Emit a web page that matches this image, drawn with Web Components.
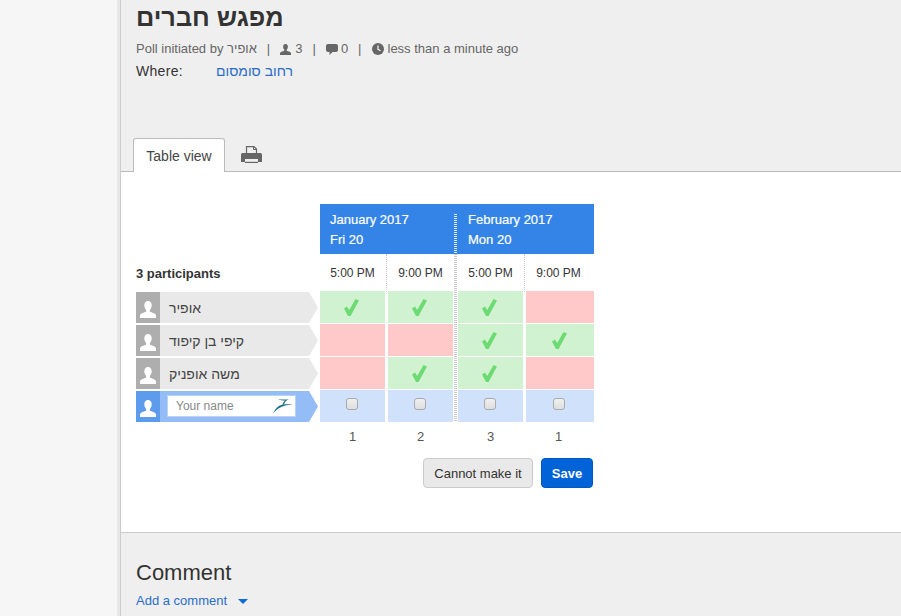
<!DOCTYPE html>
<html>
<head>
<meta charset="utf-8">
<title>Poll</title>
<style>
  html, body { margin: 0; height: 616px; overflow: hidden; }
  body {
    background: #f6f6f6;
    font-family: "Liberation Sans", Arial, sans-serif;
    color: #333;
    display: flex;
  }
</style>
</head>
<body>
<template id="person-tpl">
  <style>
    :host { display: block; width: 182px; height: 31px; }
    .row { display: flex; height: 31px; background: #e9e9e9; clip-path: polygon(0 0, 173px 0, 182px 15.5px, 173px 31px, 0 31px); }
    .avatar { width: 24px; background: #aeaeae; display: flex; align-items: center; justify-content: center; }
    .name { flex: 1; padding-left: 9px; font-size: 14px; line-height: 33px; color: #444; }
    svg { width: 16px; height: 17px; fill: #fff; margin-top: 3px; }
  </style>
  <div class="row">
    <div class="avatar"><svg viewBox="0 0 16 17"><path d="M8 0c2.300 0 3.700 1.700 3.700 4.300 0 2-.8 3.700-1.800 4.700v1.700c2 .8 5.500 1.500 6.100 3.500V17H0v-2.800c.6-2 4.100-2.700 6.100-3.500V9C5.100 8 4.300 6.300 4.300 4.300 4.300 1.700 5.700 0 8 0z"/></svg></div>
    <div class="name"><slot></slot></div>
  </div>
</template>

<script>
  const ICONS = {
    user: '<svg width="11" height="11" viewBox="0 0 16 16" fill="#666"><path d="M8 0c2.300 0 3.400 1.600 3.400 4 0 1.900-.7 3.400-1.700 4.300v1.500c2 .8 5.700 1.300 6.300 3.200V16H0v-3c.6-1.900 4.300-2.400 6.300-3.200V8.300C5.300 7.400 4.600 5.900 4.600 4 4.600 1.600 5.700 0 8 0z"/></svg>',
    comment: '<svg width="12" height="11" viewBox="0 0 12 11" fill="#666"><path d="M2 0h8a2 2 0 0 1 2 2v4a2 2 0 0 1-2 2H6.500L3.500 11V8H2a2 2 0 0 1-2-2V2a2 2 0 0 1 2-2z"/></svg>',
    clock: '<svg width="12" height="12" viewBox="0 0 12 12"><circle cx="6" cy="6" r="6" fill="#666"/><path d="M6 2.500V6.300L8.500 7.800" fill="none" stroke="#efefef" stroke-width="1.300"/></svg>',
    printer: '<svg width="21" height="17" viewBox="0 0 21 17"><path d="M5.500 7V.6h7.500l2.500 2.500V7" fill="none" stroke="#666" stroke-width="1.200"/><path d="M12.500.5v3h3" fill="none" stroke="#666"/><path d="M1.500 7h18A1.500 1.500 0 0 1 21 8.500V16h-21V8.500A1.500 1.500 0 0 1 1.500 7z" fill="#666"/><path d="M4 13h13v3H4z" fill="#efefef"/><path d="M4 15.800h13V17H4z" fill="#666"/></svg>',
    check: '<svg width="15" height="17" viewBox="0 0 15 17" fill="#6ddb73"><path d="M0 9.600 3 7.400 5.200 11 11.500 0 15 1.600 6.600 17H4z"/></svg>',
    bird: '<svg width="20" height="15" viewBox="0 0 20 15"><path d="M0 14.500C2 10 5 6.700 9 5.800c3-.6 7-.5 11-.2-3 .5-6 .6-8.500 1.200C7 8 3.500 10.500 0 14.500z" fill="#1f6f8b"/><path d="M5 0c3 .6 7 .7 11 .3-2.500.8-4 2-5 5.200L9.500 5.800C10 3.600 11 2.500 12 1.600 9.500 1.500 7 1 5 0z" fill="#1f6f8b"/></svg>'
  };

  class PersonRow extends HTMLElement {
    constructor() {
      super();
      const shadow = this.attachShadow({ mode: 'open' });
      shadow.appendChild(document.getElementById('person-tpl').content.cloneNode(true));
    }
  }
  customElements.define('person-row', PersonRow);

  class NewPerson extends HTMLElement {
    constructor() {
      super();
      const shadow = this.attachShadow({ mode: 'open' });
      shadow.innerHTML = `
        <style>
          :host { display: block; width: 182px; height: 31px; }
          .row { display: flex; height: 31px; background: #94bcf7; clip-path: polygon(0 0, 173px 0, 182px 15.5px, 173px 31px, 0 31px); }
          .avatar { width: 24px; background: #5d9cec; display: flex; align-items: center; justify-content: center; }
          .avatar svg { width: 16px; height: 17px; fill: #fff; margin-top: 3px; }
          .field { margin: 4px 0 0 7px; width: 129px; height: 22px; box-sizing: border-box; background: #fff; border: 1px solid #b9d2f5;
            display: flex; align-items: center; justify-content: space-between; padding: 0 2px 0 8px; font-size: 12px; color: #888; }
        </style>
        <div class="row">
          <div class="avatar"><svg viewBox="0 0 16 17"><path d="M8 0c2.300 0 3.700 1.700 3.700 4.300 0 2-.8 3.700-1.800 4.700v1.700c2 .8 5.500 1.500 6.100 3.500V17H0v-2.800c.6-2 4.100-2.700 6.100-3.500V9C5.100 8 4.300 6.300 4.300 4.300 4.300 1.700 5.700 0 8 0z"/></svg></div>
          <div class="field"><span>Your name</span>${ICONS.bird}</div>
        </div>`;
    }
  }
  customElements.define('new-person', NewPerson);

  // one vote cell: state is y (green), n (red) or c (checkbox)
  class VoteCell extends HTMLElement {
    constructor() {
      super();
      this.attachShadow({ mode: 'open' });
    }
    connectedCallback() {
      const s = this.getAttribute('state');
      const bg = { y: '#d1f2d1', n: '#ffc9c9', c: '#cfe1fb' }[s];
      const inner = s === 'y' ? ICONS.check : s === 'c' ? '<span class="box"></span>' : '';
      this.shadowRoot.innerHTML = `
        <style>
          :host { display: flex; height: 32px; background: ${bg}; align-items: center; justify-content: center; }
          svg { display: block; margin-right: 2px; }
          .box { display: block; width: 10px; height: 10px; border: 1px solid #aaa; border-radius: 3px; background: linear-gradient(#f0f0f0, #dedede); margin: 0 2px 4px 0; }
        </style>${inner}`;
    }
  }
  customElements.define('vote-cell', VoteCell);

  class PollTable extends HTMLElement {
    constructor() {
      super();
      const shadow = this.attachShadow({ mode: 'open' });
      const rows = ['yyyn', 'nnyy', 'nyyn', 'cccc'];
      const cells = rows.map(r => `
        <div class="votes">
          ${[...r].map(st => `<vote-cell state="${st}"></vote-cell>`).join('')}
        </div>`).join('');
      shadow.innerHTML = `
        <style>
          :host { display: block; width: 458px; font-size: 12px; }
          .grid { display: grid; grid-template-columns: 184px 274px; }
          .left { display: flex; flex-direction: column; gap: 2px; }
          .count-head { height: 86px; display: flex; align-items: flex-end; font-weight: bold; font-size: 13px; color: #333; box-sizing: border-box; padding-bottom: 9px; }
          .right { position: relative; }
          .dates { height: 50px; background: #3484e8; color: #fff; font-size: 13px; display: grid; grid-template-columns: 136px 138px; line-height: 20px; -webkit-text-stroke: .2px #fff; }
          .dates div { padding: 6px 0 0 10px; box-sizing: border-box; }
          .dates div + div { padding-left: 12px; }
          .times, .votes, .totals { display: grid; grid-template-columns: 65px 68px 70px 71px; }
          .times { height: 37px; text-align: center; color: #333; font-size: 12px; line-height: 38px; }
          .times span, .totals span { box-sizing: border-box; }
          .times span:nth-child(2), .totals span:nth-child(2) { margin-left: 1px; border-left: 1px dotted #ccc; padding-left: 1px; }
          .times span:nth-child(3), .totals span:nth-child(3) { padding-left: 5px; }
          .times span:nth-child(4), .totals span:nth-child(4) { margin-left: 1px; border-left: 1px dotted #ccc; padding: 0 3px 0 1px; }
          .totals span { border-color: transparent !important; }
          .votes { margin-bottom: 1px; }
          .votes vote-cell:nth-child(2) { margin-left: 3px; }
          .votes vote-cell:nth-child(3) { margin-left: 5px; }
          .votes vote-cell:nth-child(4) { margin-left: 3px; }
          .totals { text-align: center; color: #555; font-size: 13px; line-height: 15px; padding-top: 6px; }
          .sep { position: absolute; left: 134px; width: 3px; background: repeating-linear-gradient(#c9c9c9 0 1px, transparent 1px 2px); top: 50px; height: 168px; }
          .sep.top { top: 10px; height: 40px; background: repeating-linear-gradient(#e0ebfa 0 1px, transparent 1px 2px); }
        </style>
        <div class="grid">
          <div class="left">
            <div class="count-head">3 participants</div>
            <person-row>אופיר</person-row>
            <person-row>קיפי בן קיפוד</person-row>
            <person-row>משה אופניק</person-row>
            <new-person></new-person>
          </div>
          <div class="right">
            <div class="dates">
              <div>January 2017<br>Fri 20</div>
              <div>February 2017<br>Mon 20</div>
            </div>
            <div class="times"><span>5:00 PM</span><span>9:00 PM</span><span>5:00 PM</span><span>9:00 PM</span></div>
            ${cells}
            <div class="totals"><span>1</span><span>2</span><span>3</span><span>1</span></div>
            <div class="sep"></div><div class="sep top"></div>
          </div>
        </div>`;
    }
  }
  customElements.define('poll-table', PollTable);

  class PollHeader extends HTMLElement {
    constructor() {
      super();
      const shadow = this.attachShadow({ mode: 'open' });
      shadow.innerHTML = `
        <style>
          :host { display: block; height: 172px; box-sizing: border-box; padding: 0 0 0 15px; background: #efefef; border-bottom: 1px solid #bbb; position: relative; }
          h1 { margin: 0; padding-top: 2px; font-size: 25.300px; line-height: 30px; font-weight: bold; color: #333; white-space: nowrap; }
          .meta { margin-top: 9px; font-size: 13px; line-height: 16px; color: #666; display: flex; align-items: center; white-space: pre; }
          .meta .sep { margin: 0 10px; }
          .where { margin-top: 5px; font-size: 14px; line-height: 18px; display: flex; color: #333; }
          .where b { font-weight: normal; width: 80px; letter-spacing: .3px; }
          a { color: #2a6dc9; text-decoration: none; }
          .tabs { position: absolute; left: 12px; bottom: -1px; display: flex; align-items: center; }
          .tab { width: 92px; height: 34px; box-sizing: border-box; background: #fff; border: 1px solid #bbb; border-bottom: 0; border-radius: 3px 3px 0 0; text-align: center; font-size: 14px; line-height: 34px; color: #444; }
          .print { margin-left: 16px; margin-top: -1px; display: flex; }
        </style>
        <h1>מפגש חברים</h1>
        <div class="meta"><span>Poll initiated by אופיר</span><span class="sep">|</span>${ICONS.user}<span style="margin-left:4px">3</span><span class="sep">|</span>${ICONS.comment}<span style="margin-left:3px">0</span><span class="sep">|</span>${ICONS.clock}<span style="margin-left:4px">less than a minute ago</span></div>
        <div class="where"><b>Where:</b><a href="#">רחוב סומסום</a></div>
        <div class="tabs"><div class="tab">Table view</div><div class="print">${ICONS.printer}</div></div>`;
    }
  }
  customElements.define('poll-header', PollHeader);

  class PollActions extends HTMLElement {
    constructor() {
      super();
      const shadow = this.attachShadow({ mode: 'open' });
      shadow.innerHTML = `
        <style>
          :host { display: flex; justify-content: flex-end; gap: 8px; width: 457px; margin-top: 14px; }
          button { font: 13px "Liberation Sans", Arial, sans-serif; height: 30px; border-radius: 4px; padding: 0; }
          .no { width: 110px; background: #e9e9e9; border: 1px solid #ccc; color: #333; }
          .yes { width: 52px; background: #0063d8; border: 1px solid #0058c0; color: #fff; font-weight: bold; }
        </style>
        <button class="no">Cannot make it</button><button class="yes">Save</button>`;
    }
  }
  customElements.define('poll-actions', PollActions);

  class CommentBox extends HTMLElement {
    constructor() {
      super();
      const shadow = this.attachShadow({ mode: 'open' });
      shadow.innerHTML = `
        <style>
          :host { display: block; flex: 1; background: #efefef; border-top: 1px solid #ccc; padding: 26px 0 0 15px; }
          h2 { margin: 0; font-size: 22px; font-weight: normal; line-height: 28px; color: #333; }
          .add { margin-top: 6px; font-size: 13px; line-height: 16px; color: #2a6dc9; display: flex; align-items: center; gap: 11px; }
          i { width: 0; height: 0; border-left: 5px solid transparent; border-right: 5px solid transparent; border-top: 5px solid #0a6bd6; }
        </style>
        <h2>Comment</h2>
        <div class="add"><span>Add a comment</span><i></i></div>`;
    }
  }
  customElements.define('comment-box', CommentBox);

  class PollPage extends HTMLElement {
    constructor() {
      super();
      const shadow = this.attachShadow({ mode: 'open' });
      shadow.innerHTML = `
        <style>
          :host { display: flex; flex: 1; height: 616px; }
          .side { width: 117px; background: #f6f6f6; border-right: 3px solid #e8e8e8; }
          main { flex: 1; display: flex; flex-direction: column; border-left: 1px solid #ccc; background: #fff; }
          .body { height: 360px; box-sizing: border-box; padding: 32px 0 0 15px; }
        </style>
        <div class="side"></div>
        <main>
          <poll-header></poll-header>
          <div class="body"><poll-table></poll-table><poll-actions></poll-actions></div>
          <comment-box></comment-box>
        </main>`;
    }
  }
  customElements.define('poll-page', PollPage);
</script>
<poll-page></poll-page>
</body>
</html>
